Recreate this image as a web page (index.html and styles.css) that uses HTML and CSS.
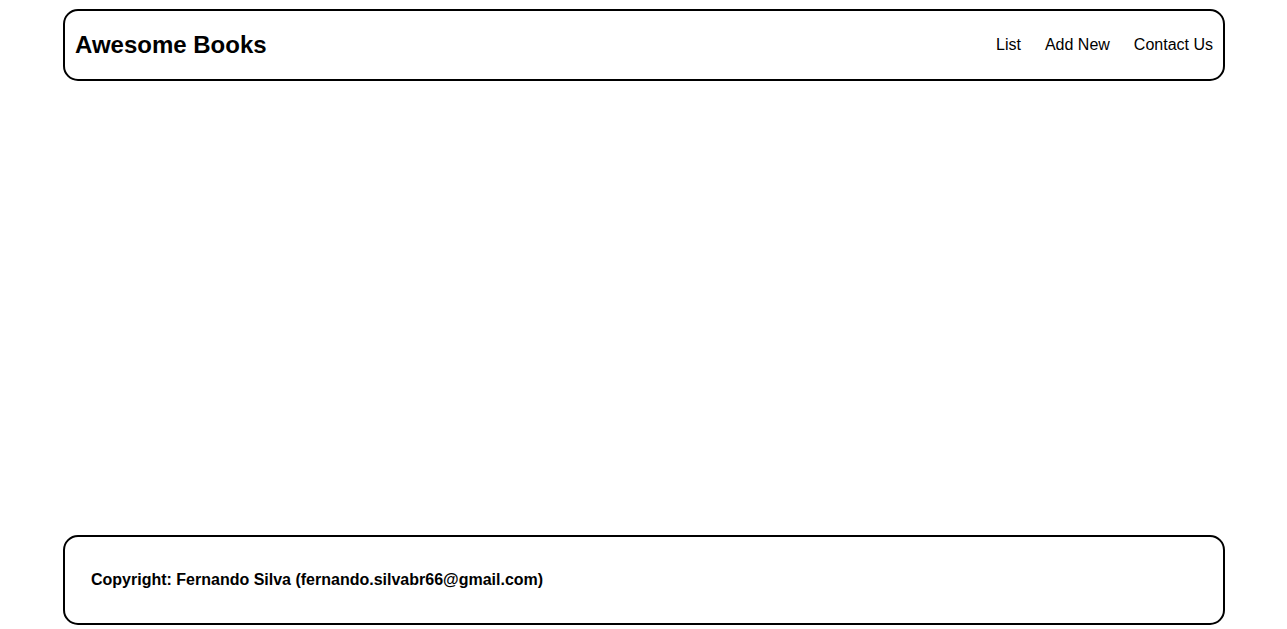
FILE: index.html
```html
<!DOCTYPE html>
<html lang="en">
<head>
<meta charset="utf-8">
<title>Awesome Books</title>
<link rel="stylesheet" href="styles.css">
</head>
<body>
<div class="page">
  <header class="header">
    <h1 class="brand">Awesome Books</h1>
    <nav class="nav">
      <a class="nav-link" href="#">List</a>
      <a class="nav-link" href="#">Add New</a>
      <a class="nav-link" href="#">Contact Us</a>
    </nav>
  </header>
  <main class="main"></main>
  <footer class="footer">
    <p class="copyright">Copyright: Fernando Silva (fernando.silvabr66@gmail.com)</p>
  </footer>
</div>
</body>
</html>
```
FILE: styles.css
```css
* { box-sizing: border-box; }
html, body { margin: 0; padding: 0; background: #fff; }
body {
  font-family: "Liberation Sans", Arial, sans-serif;
  color: #000;
}
.page {
  min-height: 100vh;
  display: flex;
  flex-direction: column;
  padding: 9px 62px 4px 63px;
}
.header {
  height: 72px;
  border: 2px solid #000;
  border-radius: 15px;
  display: flex;
  align-items: center;
  justify-content: space-between;
  padding: 0 10px;
}
.brand {
  margin: 0;
  font-size: 24px;
  font-weight: bold;
}
.nav {
  display: flex;
  gap: 24px;
}
.nav-link {
  color: #000;
  text-decoration: none;
  font-size: 16px;
}
.main { flex: 1; }
.footer {
  height: 90px;
  border: 2px solid #000;
  border-radius: 15px;
  display: flex;
  align-items: center;
  padding: 0 26px;
}
.copyright {
  margin: 0;
  font-size: 16px;
  font-weight: bold;
}
```
